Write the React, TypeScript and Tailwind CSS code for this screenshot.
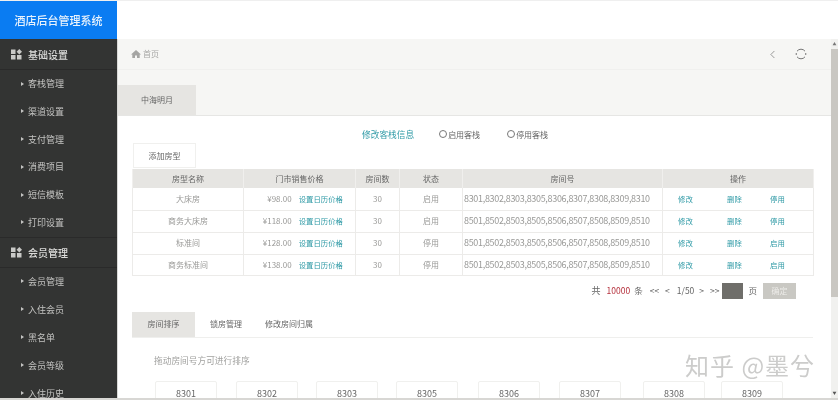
import { ChevronLeft } from 'lucide-react';

const font = 'font-["Noto_Sans_CJK_SC","Liberation_Sans",sans-serif]';

const basicLinks = ['客栈管理', '渠道设置', '支付管理', '消费项目', '短信模板', '打印设置'];
const memberLinks = ['会员管理', '入住会员', '黑名单', '会员等级', '入住历史'];

const rooms = [
  { name: '大床房', price: '¥98.00', count: 30, status: '启用', nums: '8301,8302,8303,8305,8306,8307,8308,8309,8310', action: '停用', h: 'h-[22px]' },
  { name: '商务大床房', price: '¥118.00', count: 30, status: '启用', nums: '8501,8502,8503,8505,8506,8507,8508,8509,8510', action: '停用', h: 'h-[22px]' },
  { name: '标准间', price: '¥128.00', count: 30, status: '停用', nums: '8501,8502,8503,8505,8506,8507,8508,8509,8510', action: '启用', h: 'h-[22px]' },
  { name: '商务标准间', price: '¥138.00', count: 30, status: '停用', nums: '8501,8502,8503,8505,8506,8507,8508,8509,8510', action: '启用', h: 'h-[21px]' },
];

const sortCards = [
  { num: '8301', mr: 'mr-[19px]' },
  { num: '8302', mr: 'mr-[18px]' },
  { num: '8303', mr: 'mr-[18px]' },
  { num: '8305', mr: 'mr-[20px]' },
  { num: '8306', mr: 'mr-[19px]' },
  { num: '8307', mr: 'mr-[22px]' },
  { num: '8308', mr: 'mr-[16px]' },
  { num: '8309', mr: '' },
];

function GroupIcon() {
  return (
    <svg width="11" height="11" viewBox="0 0 11 11" className="shrink-0 fill-[#c9c9c7]">
      <rect x="0" y="0.5" width="4.5" height="4.5" />
      <path d="M8.3 0 L11 2.8 L8.3 5.5 L5.6 2.8 Z" />
      <rect x="0" y="6" width="4.5" height="4.5" />
      <rect x="6" y="6" width="4.5" height="4.5" />
    </svg>
  );
}

function SideGroup({ title, links, itemH, border }: any) {
  return (
    <div>
      <div className={`flex items-center gap-[6px] pl-[11px] text-[10px] font-medium text-[#dcdcda] h-[31px] border-b border-[#2a2a2a] ${border ? 'border-t' : ''}`}>
        <GroupIcon />
        <span>{title}</span>
      </div>
      {links.map((l: string) => (
        <div key={l} className={`flex items-start ${itemH} pt-[9px] pl-[21px] gap-[4px] text-[9px] leading-[10px] text-[#c4c4c2]`}>
          <span className="mt-[2.5px] w-0 h-0 border-y-[2.5px] border-y-transparent border-l-[3px] border-l-[#c4c4c2]" />
          <span>{l}</span>
        </div>
      ))}
    </div>
  );
}

function Sidebar() {
  return (
    <aside className="w-[117px] shrink-0 bg-[#333433] overflow-hidden">
      <SideGroup title="基础设置" links={basicLinks} itemH="h-[27.8px]" />
      <SideGroup title="会员管理" links={memberLinks} itemH="h-[28px]" border />
    </aside>
  );
}

function RoomTable() {
  const cols = ['w-[111px]', 'w-[112px]', 'w-[44px]', 'w-[63px]', 'w-[200px]', 'w-[151px]'];
  const heads = ['房型名称', '门市销售价格', '房间数', '状态', '房间号', '操作'];
  return (
    <table className="table-fixed border-collapse w-[681px] text-[8px] text-[#999997]">
      <colgroup>
        {cols.map((c) => <col key={c} className={c} />)}
      </colgroup>
      <thead>
        <tr className="h-[19px] bg-[#e6e5e2] text-[#666]">
          {heads.map((h) => (
            <th key={h} className="font-normal border-x border-[#f0efed]">{h}</th>
          ))}
        </tr>
      </thead>
      <tbody>
        {rooms.map((r) => (
          <tr key={r.name} className={`${r.h} border-b border-[#ecebe9]`}>
            <td className="text-center border-x border-[#ecebe9]">{r.name}</td>
            <td className="border-r border-[#ecebe9]">
              <div className="flex items-center justify-end pr-[12px] gap-[7px]">
                <span>{r.price}</span>
                <span className="text-[7.4px] text-[#2f9aa6]">设置日历价格</span>
              </div>
            </td>
            <td className="text-center border-r border-[#ecebe9]">{r.count}</td>
            <td className="text-center border-r border-[#ecebe9]">{r.status}</td>
            <td className="pl-[1px] border-r border-[#ecebe9] text-[9px] tracking-[-0.32px] whitespace-nowrap overflow-hidden">{r.nums}</td>
            <td className="border-r border-[#ecebe9] text-[7.4px] text-[#2f9aa6]">
              <div className="flex pl-[15px]">
                <span className="w-[49px]">修改</span>
                <span className="w-[43px]">删除</span>
                <span>{r.action}</span>
              </div>
            </td>
          </tr>
        ))}
      </tbody>
    </table>
  );
}

function Pager() {
  return (
    <div className="flex items-center justify-end h-[16px] mt-[7px] w-[664px] text-[8.5px] text-[#666]">
      <span className="text-[9px]">共</span>
      <span className="ml-[6px] text-[#b5303c]">10000</span>
      <span className="ml-[4px]">条</span>
      <span className="ml-[7px]">&lt;&lt;</span>
      <span className="ml-[6px]">&lt;</span>
      <span className="ml-[7px]">1/50</span>
      <span className="ml-[5px]">&gt;</span>
      <span className="ml-[6px]">&gt;&gt;</span>
      <div className="ml-[3px] w-[21px] h-[16px] bg-[#6f6e6a]" />
      <span className="ml-[5px]">页</span>
      <button className="ml-[6px] w-[33px] h-[16px] bg-[#c9c8c3] text-[8px] text-[#ecebe8]">确定</button>
    </div>
  );
}

export default function App() {
  return (
    <div className={`${font} relative w-[838px] h-[400px] overflow-hidden bg-white blur-[0.3px]`}>
      <div className="h-[1px] bg-[#efefef]" />
      <div className="flex h-[38px]">
        <div className="w-[117px] bg-[#0a7cf2] flex items-center justify-center text-[11px] font-medium text-[#e8f2fc]">酒店后台管理系统</div>
      </div>
      <div className="flex h-[361px] border-b-2 border-[#d8d7d4]">
        <Sidebar />
        <div className="flex flex-1 min-w-0">
          <main className="flex-1 min-w-0 border-l border-[#d9d9d7] overflow-hidden">
            <div className="flex items-center h-[31px] bg-[#f6f6f4] border-b border-[#f0f0ee] pl-[13px] pr-[24px] text-[8px] text-[#a5a5a3]">
              <svg width="10" height="10" viewBox="0 0 10 10" className="fill-[#a5a5a3]">
                <path d="M5 1 L10 5.4 L8.7 5.4 L8.7 9 L6 9 L6 6.4 L4 6.4 L4 9 L1.3 9 L1.3 5.4 L0 5.4 Z" />
              </svg>
              <span className="ml-[2px]">首页</span>
              <ChevronLeft size={13} strokeWidth={1.2} className="ml-auto text-[#666]" />
              <svg width="12" height="12" viewBox="0 0 12 12" fill="none" className="ml-[16px] stroke-[#777]">
                <path d="M2 3.2 A5 5 0 0 1 10 3.2 M10 8.8 A5 5 0 0 1 2 8.8 M1.3 5 A5 5 0 0 0 1.3 7 M10.7 5 A5 5 0 0 1 10.7 7" strokeWidth="1" />
              </svg>
            </div>
            <div className="h-[46px] bg-[#f6f6f4] border-b border-[#e6e6e4] flex items-end">
              <div className="w-[78px] h-[30px] bg-[#e6e5e2] flex items-center justify-center text-[8px] text-[#666]">中海明月</div>
            </div>
            <div className="h-[27px] mt-[5px] flex items-center text-[8px] text-[#666]">
              <span className="ml-[244px] text-[8.7px] text-[#2f9aa6]">修改客栈信息</span>
              <span className="ml-[25px] mr-[1px] mb-[2px] w-[8px] h-[8px] rounded-full border border-[#777]" />
              <span>启用客栈</span>
              <span className="ml-[27px] mr-[1px] mb-[2px] w-[8px] h-[8px] rounded-full border border-[#777]" />
              <span>停用客栈</span>
            </div>
            <div className="ml-[15px] mt-[-5px] mb-[1px] w-[63px] h-[25px] flex items-center justify-center border border-[#f0f0ee] text-[8px] text-[#666]">添加房型</div>
            <div className="ml-[14px]">
              <RoomTable />
              <Pager />
              <div className="mt-[13px] h-[25px] w-[681px] box-content border-b border-[#efefed] flex items-center text-[8px] text-[#666]">
                <div className="w-[63px] h-full bg-[#e6e5e2] flex items-center justify-center">房间排序</div>
                <span className="ml-[15px]">锁房管理</span>
                <span className="ml-[23px]">修改房间归属</span>
              </div>
              <p className="ml-[22px] mt-[16px] text-[8.7px] leading-[13px] text-[#a0a09e]">拖动房间号方可进行排序</p>
              <div className="flex ml-[23px] mt-[14px] whitespace-nowrap">
                {sortCards.map((c) => (
                  <div key={c.num} className={`w-[62px] ${c.mr} h-[40px] shrink-0 pt-[5px] text-center border border-[#f0f0ee] rounded-[2px] text-[9px] text-[#666]`}>{c.num}</div>
                ))}
              </div>
            </div>
          </main>
          <div className="w-[7px] shrink-0 bg-[#f1f1ef] flex flex-col items-center">
            <div className="h-[10px] flex items-center justify-center text-[4px] text-[#777]">▲</div>
            <div className="w-full h-[248px] bg-[#c9c7c2]" />
            <div className="mt-auto h-[10px] flex items-center justify-center text-[4px] text-[#555]">▼</div>
          </div>
        </div>
      </div>
      <div className="absolute left-[685px] top-[349px] text-[24px] leading-[32px] tracking-[1px] text-[#9a9a98]/50 whitespace-nowrap">知乎 @墨兮</div>
    </div>
  );
}
